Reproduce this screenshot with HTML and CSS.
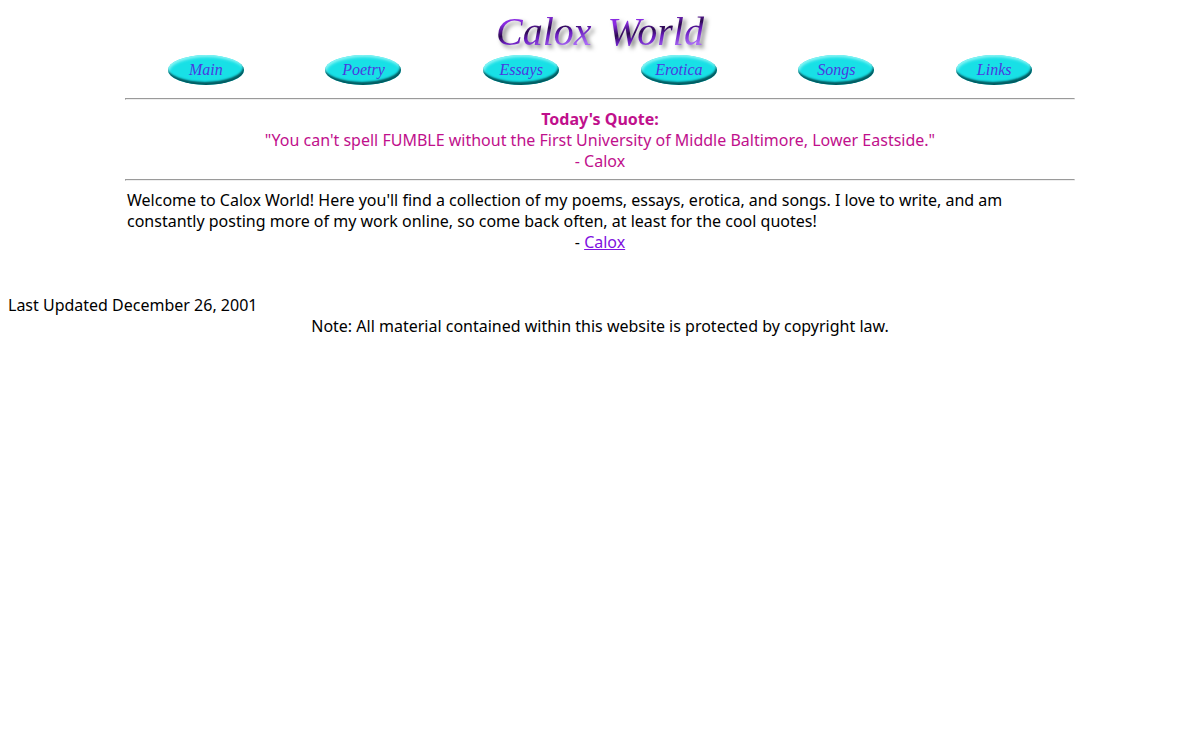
FILE: index.html
```html
<!DOCTYPE html>
<html lang="en">
<head>
    <meta charset="UTF-8">
    <meta name="viewport" content="width=device-width, initial-scale=1.0">
    <title>Calox World</title>
    <link rel="stylesheet" href="styles.css">
</head>
<body>
    <div class="container">
        <h1 class="logo"><span>Calox</span> <span>World</span></h1>

        <nav class="menu">
            <a class="pill" href="index.html">Main</a>
            <a class="pill" href="poetry.html">Poetry</a>
            <a class="pill" href="essays.html">Essays</a>
            <a class="pill" href="erotica.html">Erotica</a>
            <a class="pill" href="songs.html">Songs</a>
            <a class="pill" href="links.html">Links</a>
        </nav>

        <hr>
        <div class="quote">
            <b>Today's Quote:</b><br>
            "You can't spell FUMBLE without the First University of Middle Baltimore, Lower Eastside."<br>
            - Calox
        </div>
        <hr>

        <div class="welcome">
            Welcome to Calox World! Here you'll find a collection of my poems, essays, erotica, and songs. I love to write, and am constantly posting more of my work online, so come back often, at least for the cool quotes!
            <div class="signature">- <a href="mailto:calox">Calox</a></div>
        </div>
    </div>

    <div class="updated">Last Updated December 26, 2001</div>
    <div class="note">Note: All material contained within this website is protected by copyright law.</div>
</body>
</html>
```

FILE: styles.css
```css
body {
    margin: 8px;
    background-color: white;
    color: black;
    font-family: "Segoe UI", "Noto Sans", sans-serif;
    font-size: 16px;
    line-height: 21px;
}
.container {
    max-width: 950px;
    margin: 0 auto;
}
.logo {
    display: flex;
    justify-content: center;
    gap: 8px;
    margin: 0;
    font-family: "Liberation Serif", serif;
    font-size: 40px;
    font-style: italic;
    font-weight: normal;
    line-height: 47px;
    filter: drop-shadow(3px 3px 2px rgba(0,0,0,0.5));
}
.logo span {
    padding: 0 4px;
    background: linear-gradient(170deg, #8a2be2 28%, #2c0850 46%, #6a1cc0 58%, #a868f4 78%);
    -webkit-background-clip: text;
    background-clip: text;
    color: transparent;
}
.menu {
    display: grid;
    grid-template-columns: repeat(6, 1fr);
    justify-items: center;
    padding: 0 2px;
}
.pill {
    width: 76px;
    height: 30px;
    border-radius: 50%;
    background-color: #18e0e6;
    box-shadow: inset -1px -3px 2px #035a60, inset 1px 2px 3px #8ff5f5;
    color: #4a3ae0;
    font-family: "Liberation Serif", serif;
    font-size: 16px;
    font-style: italic;
    line-height: 29px;
    text-align: center;
    text-decoration: none;
}
hr {
    margin: 7px 0 9px;
    border: 1px solid;
    border-color: #9a9a9a #eee #eee #9a9a9a;
}
.menu + hr {
    margin-top: 13px;
}
.quote {
    color: #c0108c;
    text-align: center;
}
.welcome {
    padding: 0 2px;
}
.signature {
    text-align: center;
}
.signature a {
    color: #8010e0;
}
.updated {
    margin-top: 42px;
}
.note {
    text-align: center;
}
```
